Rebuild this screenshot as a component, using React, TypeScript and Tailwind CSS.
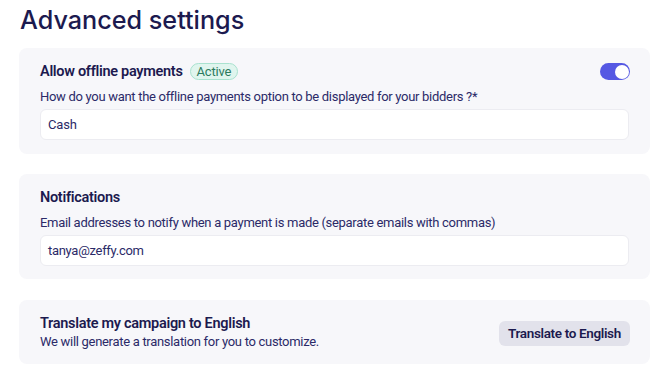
import React from "react";

const navy = "text-[#1c1a4f]";

export default function App() {
  return (
    <div className="min-h-[391px] w-[670px] bg-white pl-[19px] pr-5" style={{ fontFamily: "Roboto, 'Liberation Sans', sans-serif" }}>
      <h1 className={`pt-[2px] pl-[1px] text-[25.2px] leading-[36px] font-medium ${navy}`} style={{ fontFamily: "Inter, 'Liberation Sans', sans-serif" }}>
        Advanced settings
      </h1>
      <div className="mt-[10px] flex flex-col gap-5">
        <section className="rounded-lg bg-[#f7f7fa] px-[21px] pt-[15px] pb-[14px]">
          <div className="flex h-[17px] items-center justify-between">
            <div className="flex items-center gap-[7px]">
              <span className={`text-[14.5px] tracking-[-0.3px] font-semibold ${navy}`}>Allow offline payments</span>
              <span className="flex h-[17px] items-center rounded-full border border-[#a9e2cf] bg-[#e0f5ee] px-[6px] text-[13px] tracking-[-0.2px] text-[#2d7a5e]">Active</span>
            </div>
            <div className="mr-[-1px] flex h-[17px] w-[30px] items-center justify-end rounded-full bg-[#5558e3] pr-[1.5px]">
              <div className="h-[14px] w-[14px] rounded-full bg-white" />
            </div>
          </div>
          <p className="mt-[8px] text-[13px] tracking-[-0.3px] leading-[18px] text-[#2b2a68]">
            How do you want the offline payments option to be displayed for your bidders ?*
          </p>
          <div className="mt-[3px] flex h-[31px] items-center rounded-md border border-[#ececf1] bg-white px-[7px] text-[13px] tracking-[-0.2px] text-[#2b2a68]">
            Cash
          </div>
        </section>

        <section className="rounded-lg bg-[#f7f7fa] px-[21px] pt-[15px] pb-[13px]">
          <div className={`text-[14.5px] tracking-[-0.3px] leading-[17px] font-semibold ${navy}`}>Notifications</div>
          <p className="mt-[8px] text-[13px] tracking-[-0.3px] leading-[18px] text-[#2b2a68]">
            Email addresses to notify when a payment is made (separate emails with commas)
          </p>
          <div className="mt-[3px] flex h-[31px] items-center rounded-md border border-[#ececf1] bg-white px-[7px] text-[13px] tracking-[-0.3px] text-[#2b2a68]">
            tanya@zeffy.com
          </div>
        </section>

        <section className="mt-[1px] flex items-center justify-between rounded-lg bg-[#f7f7fa] pl-[21px] pr-5 pt-[15px] pb-[13px]">
          <div>
            <div className={`text-[14.5px] tracking-[-0.3px] leading-[17px] font-semibold ${navy}`}>Translate my campaign to English</div>
            <p className="mt-[1px] text-[13px] tracking-[-0.3px] leading-[18px] text-[#2b2a68]">We will generate a translation for you to customize.</p>
          </div>
          <button className={`h-[25px] w-[131px] rounded-md bg-[#e2e2eb] text-[13.5px] tracking-[-0.35px] font-semibold ${navy}`}>
            Translate to English
          </button>
        </section>
      </div>
    </div>
  );
}
